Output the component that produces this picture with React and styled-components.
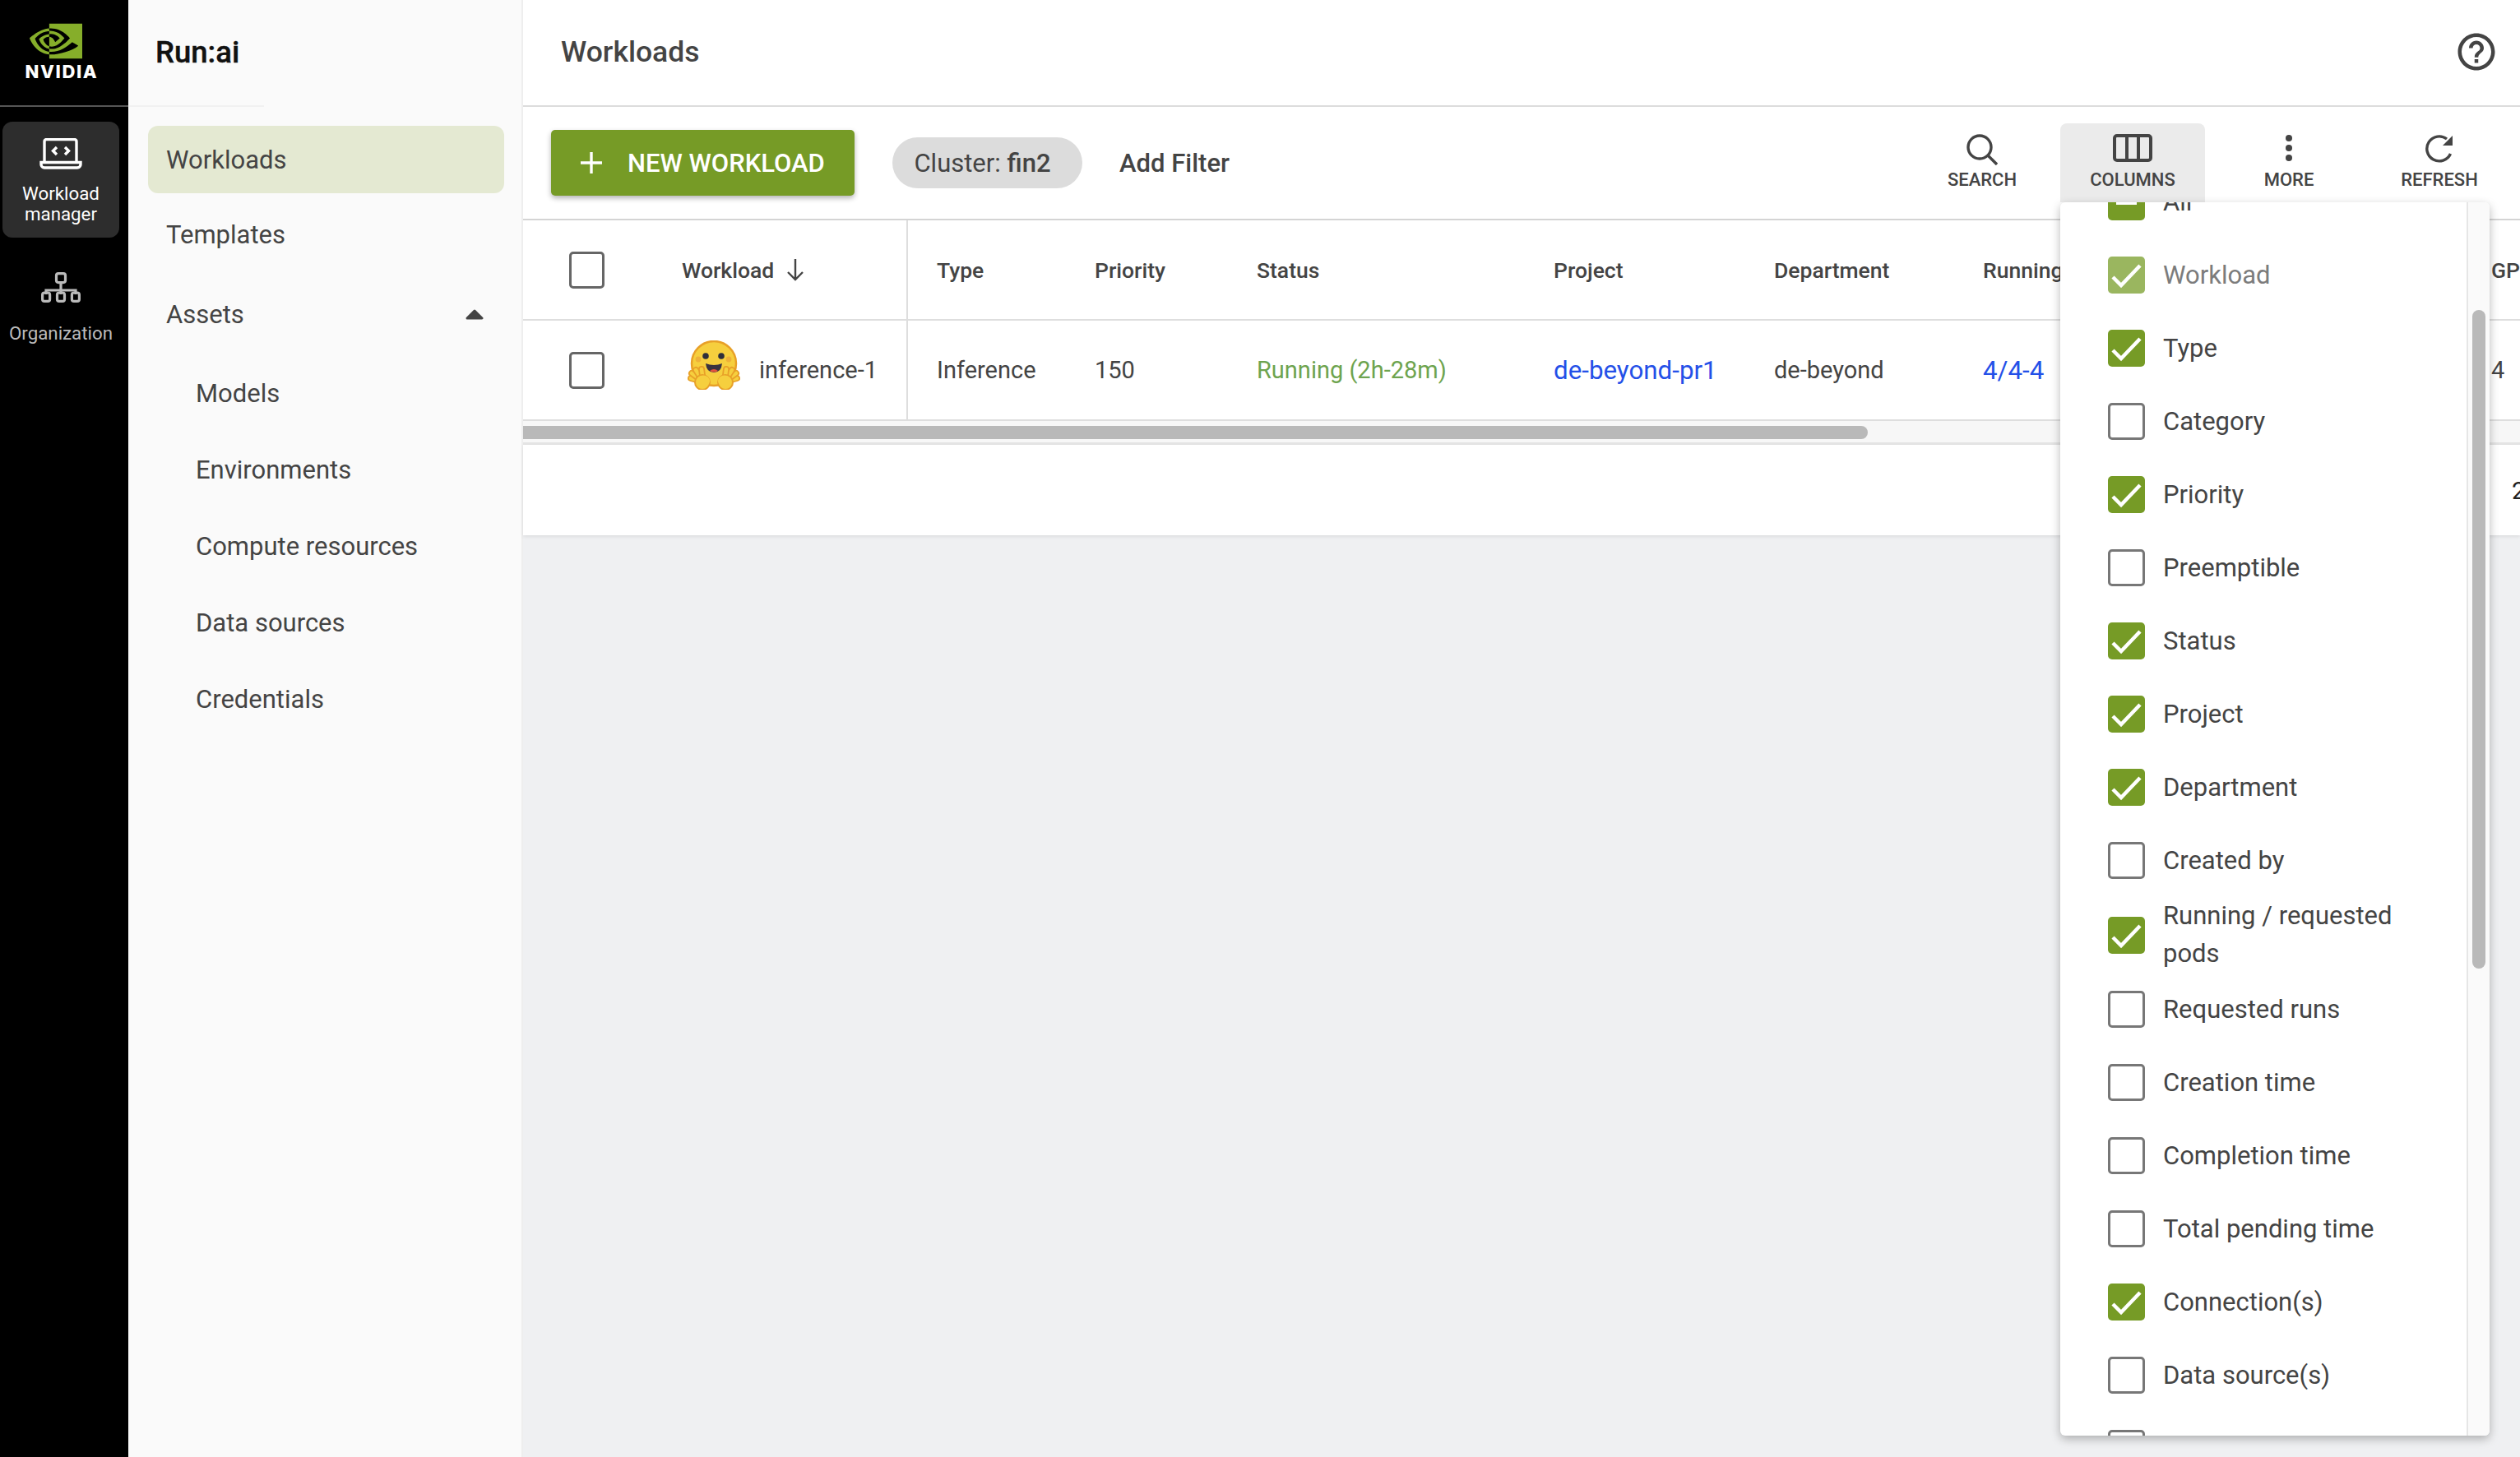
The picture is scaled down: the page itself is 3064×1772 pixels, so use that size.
import styled, { createGlobalStyle } from "styled-components";
import { SiNvidia } from "react-icons/si";
import { MdHelpOutline } from "react-icons/md";

const GlobalStyle = createGlobalStyle`
  html, body {
    margin: 0;
    padding: 0;
    height: 100%;
    overflow: hidden;
    background: #eff0f2;
    font-family: Roboto, "Liberation Sans", sans-serif;
    color: #444;
  }
  #root { height: 100%; }
  * { box-sizing: border-box; }
`;

const columns = [
  { label: "Select", width: 193 },
  { label: "Workload", width: 275 },
  { label: "Type", width: 227 },
  { label: "Priority", width: 197 },
  { label: "Status", width: 361 },
  { label: "Project", width: 268 },
  { label: "Department", width: 254 },
  { label: "Running / requested pods", width: 618 },
  { label: "GPU compute", width: 200 },
];
const gridTemplate = columns.map((c) => `${c.width}px`).join(" ");

const menuItems = [
  { label: "All", state: "some" },
  { label: "Workload", state: "on", disabled: true },
  { label: "Type", state: "on" },
  { label: "Category" },
  { label: "Priority", state: "on" },
  { label: "Preemptible" },
  { label: "Status", state: "on" },
  { label: "Project", state: "on" },
  { label: "Department", state: "on" },
  { label: "Created by" },
  { label: "Running / requested pods", state: "on" },
  { label: "Requested runs" },
  { label: "Creation time" },
  { label: "Completion time" },
  { label: "Total pending time" },
  { label: "Connection(s)", state: "on" },
  { label: "Data source(s)" },
  { label: "Environment" },
];

function Check({ state, disabled, small }) {
  return (
    <CheckBox $on={!!state} $disabled={disabled} $small={small}>
      {state === "on" && (
        <svg width="100%" height="100%" viewBox="0 0 45 45">
          <polyline points="6,25 16,35 39,11" fill="none" stroke="#fff" strokeWidth="4.5" />
        </svg>
      )}
      {state === "some" && <Dash />}
    </CheckBox>
  );
}

function LaptopIcon() {
  return (
    <svg width="52" height="38" viewBox="0 0 52 38" fill="none" stroke="#fff" strokeWidth="3.4">
      <path d="M6 29V4a2.5 2.5 0 0 1 2.5-2.5h34A2.5 2.5 0 0 1 45 4v25" />
      <path d="M2 29.5h48v2.5a4 4 0 0 1-4 4H6a4 4 0 0 1-4-4z" />
      <path d="M21 11l-4.500 4.500 4.500 4.500M31 11l4.500 4.500-4.500 4.500" />
    </svg>
  );
}

function OrgIcon() {
  return (
    <svg width="48" height="37" viewBox="0 0 48 37" fill="none" stroke="#bbb" strokeWidth="3.2">
      <rect x="18.500" y="1.600" width="11" height="11" rx="2.500" />
      <path d="M24 13v9M6 27v-5h36v5M24 22v5" />
      <rect x="1.600" y="25" width="9" height="10.400" rx="2.500" />
      <rect x="19.500" y="25" width="9" height="10.400" rx="2.500" />
      <rect x="37.400" y="25" width="9" height="10.400" rx="2.500" />
    </svg>
  );
}

function Hand({ flip }) {
  const fingers = [
    [4, 46],
    [5, 40],
    [10, 36],
    [17, 35],
  ];
  return (
    <g transform={flip ? "translate(64 0) scale(-1 1)" : undefined}>
      {fingers.map(([x, y]) => (
        <g key={x} strokeLinecap="round">
          <line x1="19" y1="50" x2={x} y2={y} stroke="#e8a028" strokeWidth="8" />
          <line x1="19" y1="50" x2={x} y2={y} stroke="#f6cf3e" strokeWidth="4.500" />
        </g>
      ))}
      <circle cx="18" cy="51" r="9" fill="#f6cf3e" stroke="#e8a028" strokeWidth="2" />
      <ellipse cx="19" cy="49.500" rx="8" ry="7" fill="#f6cf3e" />
    </g>
  );
}

function HuggingFace() {
  return (
    <EmojiIcon width="64" height="60" viewBox="0 0 64 60">
      <circle cx="32" cy="28" r="27" fill="#f6cf3e" stroke="#e8a028" strokeWidth="2.500" />
      <circle cx="22" cy="19" r="3.800" fill="#2e2e3a" />
      <circle cx="41" cy="19" r="3.800" fill="#2e2e3a" />
      <circle cx="13" cy="23" r="3.400" fill="#eeb13a" />
      <circle cx="50" cy="23" r="3.400" fill="#eeb13a" />
      <path d="M22 28Q32 32 42 28Q41 39 32 39Q23 39 22 28Z" fill="#3a3340" />
      <path d="M27 37Q32 33 37 37Q32 40 27 37Z" fill="#e5533d" />
      <Hand />
      <Hand flip />
    </EmojiIcon>
  );
}

function SortArrow() {
  return (
    <svg width="24" height="28" viewBox="0 0 24 28" fill="none" stroke="#444" strokeWidth="2.400">
      <path d="M12 1v25M3 17l9 9 9-9" />
    </svg>
  );
}

export default function App() {
  return (
    <Page>
      <GlobalStyle />
      <Rail>
        <Logo>
          <SiNvidia size={64} color="#86ae2a" />
          <Wordmark>NVIDIA</Wordmark>
        </Logo>
        <RailItem $active>
          <LaptopIcon />
          <RailLabel>
            Workload
            <br />
            manager
          </RailLabel>
        </RailItem>
        <RailItem $muted>
          <OrgIcon />
          <RailLabel>Organization</RailLabel>
        </RailItem>
      </Rail>

      <Sidebar>
        <SidebarHead>Run:ai</SidebarHead>
        <SidebarRule />
        <Nav>
          <NavItem $active>Workloads</NavItem>
          <NavItem>Templates</NavItem>
          <NavItem $group>
            Assets
            <svg width="22" height="13" viewBox="0 0 22 13">
              <path d="M11 2L20 11H2Z" fill="#444" stroke="#444" strokeWidth="3" strokeLinejoin="round" />
            </svg>
          </NavItem>
          <NavItem $sub $first>Models</NavItem>
          <NavItem $sub>Environments</NavItem>
          <NavItem $sub>Compute resources</NavItem>
          <NavItem $sub>Data sources</NavItem>
          <NavItem $sub>Credentials</NavItem>
        </Nav>
      </Sidebar>

      <Main>
        <Header>
          <Title>Workloads</Title>
          <MdHelpOutline size={54} color="#444" />
        </Header>

        <Toolbar>
          <NewButton>
            <svg width="26" height="26" viewBox="0 0 26 26" stroke="#fff" strokeWidth="3.400">
              <path d="M13 0v26M0 13h26" />
            </svg>
            NEW WORKLOAD
          </NewButton>
          <Chip>
            Cluster: <strong>fin2</strong>
          </Chip>
          <AddFilter>Add Filter</AddFilter>
          <Tools>
            <ToolButton>
              <ToolIcon>
                <svg width="38" height="38" viewBox="0 0 38 38" fill="none" stroke="#444" strokeWidth="3.400">
                  <circle cx="16" cy="16" r="14" />
                  <path d="M26 26l11 11" />
                </svg>
              </ToolIcon>
              SEARCH
            </ToolButton>
            <ToolAnchor>
              <ToolButton $active>
                <ToolIcon>
                  <svg width="48" height="34" viewBox="0 0 48 34" fill="none" stroke="#444" strokeWidth="4">
                    <rect x="2" y="2" width="44" height="30" rx="3" />
                    <path d="M17 2v30M31 2v30" />
                  </svg>
                </ToolIcon>
                COLUMNS
              </ToolButton>
              <Menu>
                <MenuList>
                  {menuItems.map((item) => (
                    <MenuRow key={item.label} $disabled={item.disabled}>
                      <Check state={item.state} disabled={item.disabled} />
                      <MenuLabel>{item.label}</MenuLabel>
                    </MenuRow>
                  ))}
                </MenuList>
                <MenuTrack>
                  <MenuThumb />
                </MenuTrack>
              </Menu>
            </ToolAnchor>
            <ToolButton $spaced>
              <ToolIcon>
                <svg width="10" height="34" viewBox="0 0 10 34" fill="#444">
                  <circle cx="5" cy="5" r="4" />
                  <circle cx="5" cy="17" r="4" />
                  <circle cx="5" cy="29" r="4" />
                </svg>
              </ToolIcon>
              MORE
            </ToolButton>
            <ToolButton>
              <ToolIcon>
                <svg width="36" height="36" viewBox="0 0 36 36">
                  <path d="M31.500 24A15 15 0 1 1 27 6" fill="none" stroke="#444" strokeWidth="3.400" />
                  <path d="M34 2V14H22Z" fill="#444" />
                </svg>
              </ToolIcon>
              REFRESH
            </ToolButton>
          </Tools>
        </Toolbar>

        <TableRow $head>
          <Cell $center>
            <Check small />
          </Cell>
          <Cell $divider>
            Workload
            <SortArrow />
          </Cell>
          <Cell $pad>Type</Cell>
          <Cell>Priority</Cell>
          <Cell>Status</Cell>
          <Cell>Project</Cell>
          <Cell>Department</Cell>
          <Cell>Running / requested pods</Cell>
          <Cell>GPU compute</Cell>
        </TableRow>
        <TableRow>
          <Cell $center>
            <Check small />
          </Cell>
          <Cell $divider $icon>
            <HuggingFace />
            inference-1
          </Cell>
          <Cell $pad>Inference</Cell>
          <Cell>150</Cell>
          <Cell $tone="#6ea44f">Running (2h-28m)</Cell>
          <Cell $tone="#2450e8" $link>de-beyond-pr1</Cell>
          <Cell>de-beyond</Cell>
          <Cell $tone="#2450e8" $link>4/4-4</Cell>
          <Cell>4</Cell>
        </TableRow>
        <ScrollTrack>
          <ScrollThumb />
        </ScrollTrack>
        <Footer>25</Footer>
      </Main>
    </Page>
  );
}

const Page = styled.div`
  display: flex;
  width: 3064px;
  height: 1772px;
  overflow: hidden;
`;

const Rail = styled.aside`
  flex: 0 0 156px;
  background: #000;
  padding-right: 11px;
  padding-left: 3px;
`;

const Logo = styled.div`
  height: 130px;
  margin: 0 -11px 18px -3px;
  padding-top: 18px;
  border-bottom: 2px solid #555;
  display: flex;
  flex-direction: column;
  align-items: center;
  svg {
    margin-right: 20px;
  }
`;

const Wordmark = styled.div`
  margin: -4px 0 0 -6px;
  font-family: Inter, sans-serif;
  font-size: 22px;
  line-height: 18px;
  font-weight: 800;
  letter-spacing: 1.6px;
  color: #fff;
`;

const RailItem = styled.div`
  height: 141px;
  margin-bottom: 22px;
  padding-top: 20px;
  display: flex;
  flex-direction: column;
  align-items: center;
  gap: ${(p) => (p.$muted ? "25px" : "17px")};
  border-radius: 12px;
  background: ${(p) => (p.$active ? "#2d2d2d" : "transparent")};
  color: ${(p) => (p.$muted ? "#bbb" : "#fff")};
`;

const RailLabel = styled.div`
  font-size: 22.300px;
  line-height: 25px;
  text-align: center;
`;

const Sidebar = styled.aside`
  flex: 0 0 480px;
  background: #fafafa;
  border-right: 2px solid #eee;
`;

const SidebarHead = styled.div`
  height: 128px;
  padding: 0 0 2px 33px;
  display: flex;
  align-items: center;
  font-size: 36.500px;
  font-weight: 500;
  color: #111;
  -webkit-text-stroke: 0.4px #111;
`;

const SidebarRule = styled.div`
  width: 165px;
  height: 2px;
  background: #f1f1f1;
`;

const Nav = styled.nav`
  padding: 23px 21px 0 24px;
  display: flex;
  flex-direction: column;
  gap: 11px;
`;

const NavItem = styled.div`
  height: 82px;
  flex: none;
  display: flex;
  align-items: center;
  justify-content: space-between;
  padding: 0 25px 0 ${(p) => (p.$sub ? "58px" : "22px")};
  margin-bottom: ${(p) => (p.$active ? "-1.500px" : "0")};
  margin-top: ${(p) => (p.$group ? "4px" : p.$first ? "3px" : "0")};
  border-radius: 12px;
  font-size: 31px;
  color: #444;
  background: ${(p) => (p.$active ? "#e4e9d2" : "transparent")};
`;

const Main = styled.main`
  flex: 1;
  min-width: 0;
  display: flex;
  flex-direction: column;
`;

const Header = styled.header`
  height: 130px;
  flex: none;
  padding: 0 26px 3px 46px;
  display: flex;
  align-items: center;
  justify-content: space-between;
  background: #fff;
  border-bottom: 2px solid #dcdcdc;
`;

const Title = styled.h1`
  margin: 0;
  font-size: 35.500px;
  font-weight: 500;
  color: #444;
`;

const Toolbar = styled.div`
  height: 138px;
  flex: none;
  padding: 0 10px 0 34px;
  display: flex;
  align-items: center;
  background: #fff;
  border-bottom: 2px solid #d4d4d4;
`;

const NewButton = styled.button`
  width: 369px;
  height: 80px;
  padding: 0 0 0 36px;
  display: flex;
  align-items: center;
  gap: 31px;
  border: none;
  border-radius: 5px;
  background: #769b26;
  box-shadow: 0 3px 6px rgba(0, 0, 0, 0.3);
  color: #fff;
  font-family: inherit;
  font-size: 31px;
  font-weight: 500;
`;

const Chip = styled.div`
  width: 231px;
  height: 62px;
  margin-left: 46px;
  padding-right: 12px;
  display: flex;
  align-items: center;
  justify-content: center;
  gap: 0.25em;
  border-radius: 31px;
  background: #dcdcdc;
  font-size: 31px;
  strong {
    font-weight: 500;
  }
`;

const AddFilter = styled.div`
  margin-left: 45px;
  font-size: 31px;
  font-weight: 500;
`;

const Tools = styled.div`
  margin-left: auto;
  display: flex;
  gap: 7px;
`;

const ToolAnchor = styled.div`
  position: relative;
`;

const ToolButton = styled.div`
  width: 176px;
  height: 96px;
  margin-left: ${(p) => (p.$spaced ? "7px" : "0")};
  padding-top: 13px;
  display: flex;
  flex-direction: column;
  align-items: center;
  gap: 6px;
  border-radius: 8px 8px 0 0;
  background: ${(p) => (p.$active ? "#ebebeb" : "transparent")};
  font-size: 22px;
  line-height: 24px;
  font-weight: 500;
`;

const ToolIcon = styled.div`
  height: 38px;
  display: flex;
  align-items: flex-start;
`;

const Menu = styled.div`
  position: absolute;
  top: 100%;
  left: 0;
  z-index: 10;
  width: 522px;
  height: 1500px;
  display: flex;
  overflow: hidden;
  border-radius: 6px;
  background: #fff;
  box-shadow: 0 4px 12px rgba(0, 0, 0, 0.28);
`;

const MenuList = styled.div`
  flex: 1;
  min-width: 0;
  margin-top: -45px;
  padding: 0 40px 0 58px;
`;

const MenuRow = styled.div`
  min-height: 89px;
  display: flex;
  align-items: center;
  gap: 22px;
  color: ${(p) => (p.$disabled ? "#7c7c7c" : "#444")};
`;

const MenuLabel = styled.div`
  font-size: 31px;
  line-height: 46px;
`;

const MenuTrack = styled.div`
  flex: 0 0 28px;
  padding: 131px 0 0 5px;
  background: #fafafa;
  border-left: 2px solid #e6e6e6;
`;

const MenuThumb = styled.div`
  width: 16px;
  height: 801px;
  border-radius: 8px;
  background: #b9b9b9;
`;

const CheckBox = styled.div`
  flex: none;
  width: ${(p) => (p.$small ? "43px" : "45px")};
  height: 45px;
  display: flex;
  align-items: center;
  justify-content: center;
  border-radius: 5px;
  border: ${(p) => (p.$on ? "none" : `3.5px solid ${p.$small ? "#666" : "#777"}`)};
  background: ${(p) => (p.$on ? (p.$disabled ? "#9ab65f" : "#769b26") : "#fff")};
`;

const Dash = styled.div`
  width: 25px;
  height: 6px;
  background: #fff;
`;

const TableRow = styled.div`
  height: 122px;
  flex: none;
  display: grid;
  grid-template-columns: ${gridTemplate};
  background: #fff;
  border-bottom: 2px solid #dedede;
  font-size: ${(p) => (p.$head ? "26.500px" : "29px")};
  font-weight: ${(p) => (p.$head ? 500 : 400)};
`;

const Cell = styled.div`
  display: flex;
  align-items: center;
  min-width: 0;
  white-space: nowrap;
  justify-content: ${(p) => (p.$center ? "center" : "flex-start")};
  gap: ${(p) => (p.$icon ? "23px" : "14px")};
  margin-left: ${(p) => (p.$icon ? "7px" : "0")};
  padding-left: ${(p) => (p.$pad ? "35px" : "0")};
  padding-right: ${(p) => (p.$center ? "38px" : "0")};
  border-right: ${(p) => (p.$divider ? "2px solid #dedede" : "none")};
  color: ${(p) => p.$tone || "#444"};
  font-size: ${(p) => (p.$link ? "31.300px" : "inherit")};
`;

const EmojiIcon = styled.svg`
  flex: none;
  margin-bottom: 12px;
`;

const ScrollTrack = styled.div`
  height: 29px;
  flex: none;
  padding-top: 6px;
  background: #f7f7f7;
  border-bottom: 3px solid #e4e4e4;
`;

const ScrollThumb = styled.div`
  width: 1635px;
  height: 16px;
  border-radius: 0 8px 8px 0;
  background: #b9b9b9;
`;

const Footer = styled.div`
  height: 110px;
  flex: none;
  padding: 0 0 0 2418px;
  display: flex;
  align-items: center;
  overflow: hidden;
  background: #fff;
  box-shadow: 0 2px 4px rgba(0, 0, 0, 0.08);
  font-size: 30px;
  color: #222;
`;
